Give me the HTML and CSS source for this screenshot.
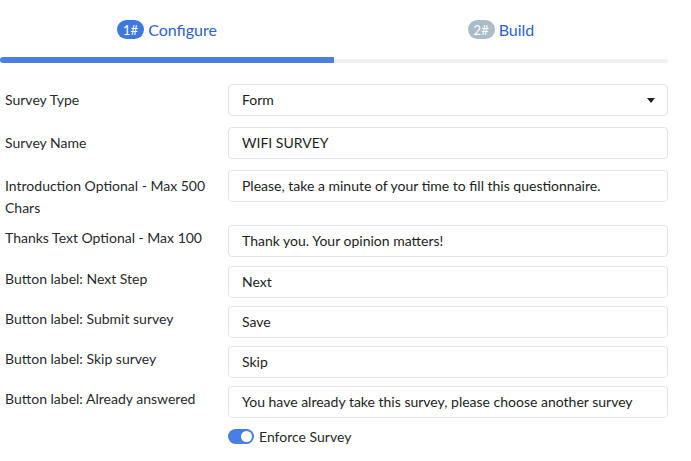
FILE: index.html
```html
<!DOCTYPE html>
<html lang="en">
<head>
<meta charset="utf-8">
<title>Survey wizard</title>
<link rel="stylesheet" href="styles.css">
</head>
<body>
<div class="page">
  <div class="steps">
    <div class="step step-active"><span class="step-badge">1#</span><span class="step-name">Configure</span></div>
    <div class="step"><span class="step-badge step-badge-muted">2#</span><span class="step-name">Build</span></div>
  </div>
  <div class="progress">
    <div class="progress-bar" style="width: 50%"></div>
    <div class="progress-rest"></div>
  </div>
  <form class="form">
    <div class="row row-loose">
      <label class="row-label">Survey Type</label>
      <div class="select">
        <span class="control-text">Form</span>
        <svg class="caret" width="8" height="5" viewBox="0 0 8 5"><path d="M0 0h8L4 5z" fill="#222"/></svg>
      </div>
    </div>
    <div class="row row-loose">
      <label class="row-label">Survey Name</label>
      <div class="input"><span class="control-text">WIFI SURVEY</span></div>
    </div>
    <div class="row row-3">
      <label class="row-label">Introduction Optional - Max 500 Chars</label>
      <div class="input"><span class="control-text">Please, take a minute of your time to fill this questionnaire.</span></div>
    </div>
    <div class="row row-4 row-tight">
      <label class="row-label">Thanks Text Optional - Max 100</label>
      <div class="input"><span class="control-text">Thank you. Your opinion matters!</span></div>
    </div>
    <div class="row row-tight">
      <label class="row-label">Button label: Next Step</label>
      <div class="input"><span class="control-text">Next</span></div>
    </div>
    <div class="row row-tight">
      <label class="row-label">Button label: Submit survey</label>
      <div class="input"><span class="control-text">Save</span></div>
    </div>
    <div class="row row-tight">
      <label class="row-label">Button label: Skip survey</label>
      <div class="input"><span class="control-text">Skip</span></div>
    </div>
    <div class="row row-tight">
      <label class="row-label">Button label: Already answered</label>
      <div class="input"><span class="control-text">You have already take this survey, please choose another survey</span></div>
    </div>
    <div class="switch-row">
      <span class="switch"><span class="switch-knob"></span></span>
      <span class="switch-label">Enforce Survey</span>
    </div>
  </form>
</div>
</body>
</html>
```
FILE: styles.css
```css
* { box-sizing: border-box; }
html, body { margin: 0; padding: 0; background: #fff; }
body {
  font-family: Lato, "Noto Sans", sans-serif;
  font-size: 14px;
  color: #1f2327;
}
.page { width: 668px; }

.steps { display: flex; height: 57px; }
.step {
  flex: 1;
  display: flex;
  align-items: center;
  justify-content: center;
  padding-top: 2px;
}
.step-badge {
  display: inline-flex;
  align-items: center;
  justify-content: center;
  width: 27px;
  height: 19px;
  border-radius: 10px;
  background: #3d78de;
  color: #fff;
  font-size: 13px;
  margin-right: 4px;
}
.step-badge-muted { background: #a9bcc7; }
.step-name { color: #2f5fcf; font-size: 16px; }

.progress { display: flex; align-items: flex-end; height: 6px; }
.progress-bar { height: 6px; background: #4a7ee0; border-radius: 3px 0 0 3px; }
.progress-rest { flex: 1; height: 4px; background: #edf0f5; border-radius: 0 2px 2px 0; }

.form { margin-top: 21px; }
.row { display: flex; align-items: flex-start; margin-bottom: 8px; }
.row-loose { margin-bottom: 11px; }
.row-3 { margin-bottom: 7px; }
.row-4 { margin-bottom: 9px; }
.row-label {
  width: 228px;
  padding: 5px 10px 0 5px;
  line-height: 21.5px;
  color: #262a2e;
}
.row-tight .row-label { padding-top: 2px; }
.input, .select {
  flex: 1;
  height: 32px;
  border: 1px solid #dfe5ec;
  border-radius: 4px;
  display: flex;
  align-items: center;
  padding: 0 12px 2px 13px;
  color: #1b1e22;
}
.select { justify-content: space-between; }
.caret { margin-top: 2px; }

.switch-row { display: flex; align-items: center; margin-left: 228px; margin-top: 10px; }
.switch {
  width: 26px;
  height: 15px;
  border-radius: 8px;
  background: #4a7ee0;
  display: flex;
  align-items: center;
  justify-content: flex-end;
  padding-right: 2px;
}
.switch-knob { width: 11px; height: 11px; border-radius: 50%; background: #fff; }
.switch-label { margin-left: 5px; color: #262a2e; }
```
